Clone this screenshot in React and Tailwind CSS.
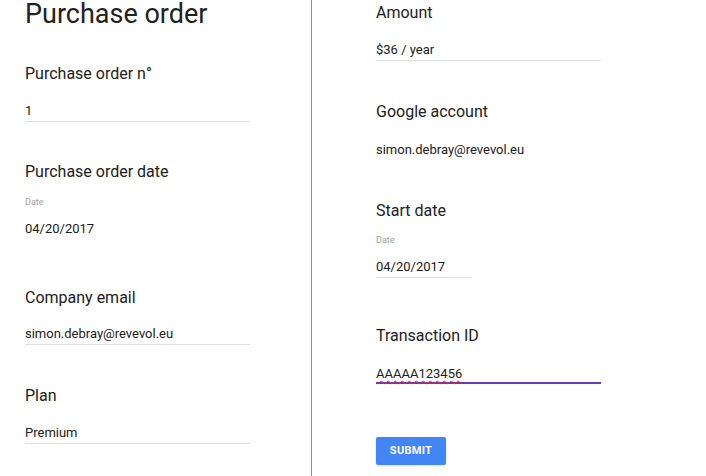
import React from 'react';

const font = { fontFamily: 'Roboto, "Noto Sans", Arial, sans-serif' };

function Label({ children, className = '' }) {
  return <div className={`text-[16px] leading-[20px] text-[#212121] ${className}`}>{children}</div>;
}

function Value({ children, className = '', line = true }) {
  return (
    <div
      className={`text-[13px] leading-[16px] text-[#212121] ${
        line ? 'pb-[2px] border-b border-[#e0e0e0]' : ''
      } ${className}`}
    >
      {children}
    </div>
  );
}

function Hint({ children, className = '' }) {
  return <div className={`text-[9px] leading-[12px] text-[#9e9e9e] ${className}`}>{children}</div>;
}

export default function App() {
  return (
    <div className="h-screen w-full flex bg-white overflow-hidden" style={font}>
      {/* colonne gauche */}
      <div className="w-[312px] shrink-0 h-full border-r border-[#8e8e8e] pl-[25px]">
        <h1 className="text-[27px] leading-[29px] font-normal text-[#212121]">Purchase order</h1>
        <Label className="mt-[35px]">Purchase order n°</Label>
        <Value className="mt-[19px] w-[225px]">1</Value>

        <Label className="mt-[40px]">Purchase order date</Label>
        <Hint className="mt-[14px]">Date</Hint>
        <Value className="mt-[13px]" line={false}>04/20/2017</Value>

        <Label className="mt-[51px]">Company email</Label>
        <Value className="mt-[18px] w-[225px]">simon.debray@revevol.eu</Value>

        <Label className="mt-[41px]">Plan</Label>
        <Value className="mt-[19px] w-[225px]">Premium</Value>
      </div>

      {/* colonne droite */}
      <div className="flex-1 h-full pl-[64px] pt-[3px]">
        <Label>Amount</Label>
        <Value className="mt-[19px] w-[225px]">$36 / year</Value>

        <Label className="mt-[41px]">Google account</Label>
        <Value className="mt-[20px]" line={false}>simon.debray@revevol.eu</Value>

        <Label className="mt-[43px]">Start date</Label>
        <Hint className="mt-[13px]">Date</Hint>
        <Value className="mt-[13px] w-[96px]">04/20/2017</Value>

        <Label className="mt-[48px]">Transaction ID</Label>
        <div className="mt-[20px] w-[225px] text-[13px] leading-[16px] text-[#212121] border-b-2 border-[#673ab7]">
          <span className="underline decoration-wavy decoration-[#ff1a1a] decoration-1 underline-offset-[2px]">
            AAAAA123456
          </span>
        </div>

        <button className="mt-[53px] w-[70px] h-[28px] rounded-[2px] bg-[#4285f4] text-white text-[11px] font-bold tracking-[0.3px] flex items-center justify-center shadow-sm">
          SUBMIT
        </button>
      </div>
    </div>
  );
}
